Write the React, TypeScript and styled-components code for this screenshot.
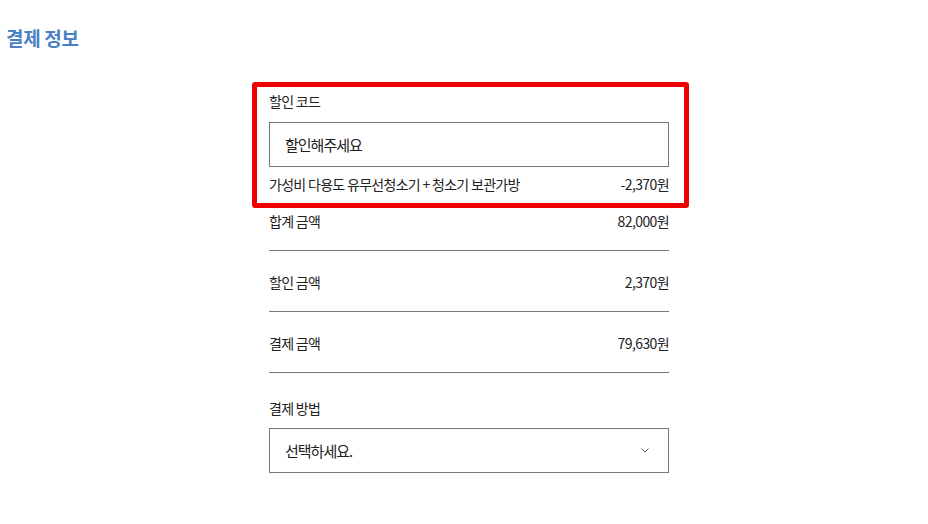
import styled, { createGlobalStyle } from "styled-components";

const GlobalStyle = createGlobalStyle`
  body {
    margin: 0;
    background: #ffffff;
    font-family: "Noto Sans CJK KR", "Noto Sans", sans-serif;
    color: #222222;
  }
`;

const Page = styled.div`
  width: 928px;
  min-height: 524px;
`;

const Title = styled.h2`
  margin: 0;
  padding: 26px 0 0 6px;
  font-size: 19px;
  line-height: 24px;
  font-weight: 700;
  color: #4a80c6;
  letter-spacing: -0.3px;
`;

const Center = styled.div`
  padding-left: 10px;
  padding-top: 32px;
  display: flex;
  justify-content: center;
`;

const Column = styled.div`
  width: 400px;
  display: flex;
  flex-direction: column;
`;

const Highlight = styled.section`
  margin: 0 -20px -18px -17px;
  padding: 4px 15px 9px 12px;
  border: 5px solid #ee0000;
  border-radius: 3px;
  display: flex;
  flex-direction: column;
`;

const Label = styled.div<{ $top?: number }>`
  font-size: 14px;
  line-height: 20px;
  letter-spacing: -0.7px;
  margin-top: ${(p) => p.$top ?? 0}px;
`;

const Field = styled.div<{ $gap: number }>`
  margin-top: ${(p) => p.$gap}px;
  height: 45px;
  box-sizing: border-box;
  border: 1px solid #777777;
  padding: 0 19px 0 15px;
  display: flex;
  align-items: center;
  justify-content: space-between;
  font-size: 15px;
  letter-spacing: -1px;
  color: #222222;
`;

const Row = styled.div<{ $line?: boolean; $pad?: string }>`
  display: flex;
  justify-content: space-between;
  align-items: center;
  font-size: 14px;
  line-height: 20px;
  letter-spacing: -0.7px;
  padding: ${(p) => p.$pad ?? "21px 0 19px"};
  border-bottom: ${(p) => (p.$line ? "1px solid #777777" : "none")};
`;

const Amount = styled.span`
  letter-spacing: -0.6px;
`;

const Chevron = () => (
  <svg width="8" height="5" viewBox="0 0 8 5">
    <polyline points="0.5,0.5 4,4 7.5,0.5" fill="none" stroke="#666" strokeWidth="1" />
  </svg>
);

const rows = [
  { label: "합계 금액", value: "82,000원" },
  { label: "할인 금액", value: "2,370원" },
  { label: "결제 금액", value: "79,630원" },
];

export default function App() {
  return (
    <Page>
      <GlobalStyle />
      <Title>결제 정보</Title>
      <Center>
        <Column>
          <Highlight>
            <Label>할인 코드</Label>
            <Field $gap={11}>할인해주세요</Field>
            <Row $pad="7px 0 0">
              <span>가성비 다용도 유무선청소기 + 청소기 보관가방</span>
              <Amount>-2,370원</Amount>
            </Row>
          </Highlight>
          {rows.map((r) => (
            <Row key={r.label} $line>
              <span>{r.label}</span>
              <Amount>{r.value}</Amount>
            </Row>
          ))}
          <Label $top={25}>결제 방법</Label>
          <Field $gap={10}>
            선택하세요.
            <Chevron />
          </Field>
        </Column>
      </Center>
    </Page>
  );
}
